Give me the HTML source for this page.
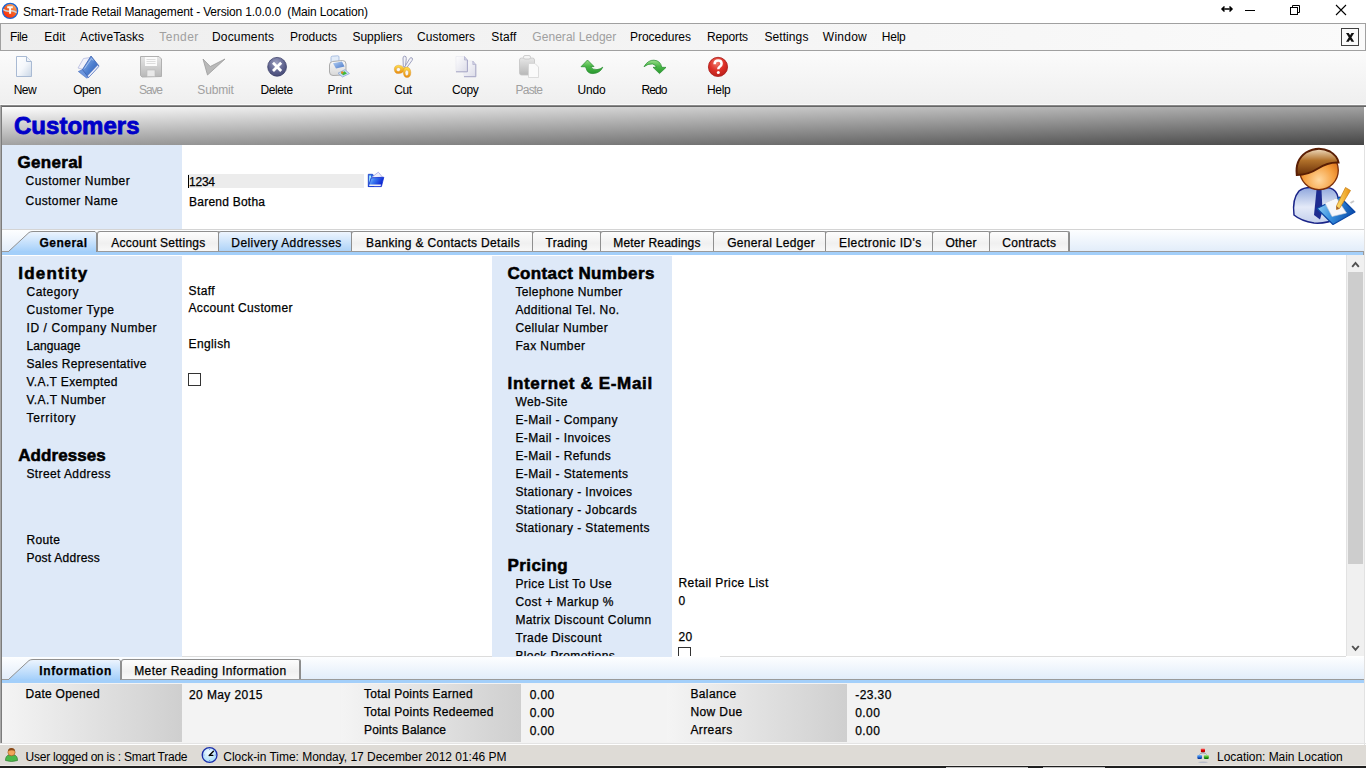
<!DOCTYPE html>
<html><head><meta charset="utf-8"><title>Customers</title>
<style>
html,body{margin:0;padding:0}
body{width:1366px;height:768px;overflow:hidden;position:relative;background:#fff;font-family:"Liberation Sans",sans-serif;color:#000}
.r{position:absolute}
.t{position:absolute;white-space:pre;font-family:"Liberation Sans",sans-serif;-webkit-text-stroke-width:0.25px}
.t.u{-webkit-text-stroke-width:0}
.t.big{-webkit-text-stroke-width:0.8px}
.t.hd{-webkit-text-stroke-width:0.55px}
.tab{position:absolute;top:231px;height:20px;box-sizing:border-box;border:1px solid #8f8f8f;border-bottom:none;border-radius:3px 2px 0 0;background:linear-gradient(#fdfdfd,#f0f0f0 60%,#f8f8f8);box-shadow:1px 0 0 #8c8c8c}
.tab.hov{background:linear-gradient(#eef5fe,#aed3f8)}
.gbox{position:absolute;background:linear-gradient(90deg,#f4f4f4,#cfcfcf)}
</style></head>
<body>
<!-- menu bar -->
<div class="r" style="left:0;top:23px;width:1366px;height:28px;box-sizing:border-box;border:1px solid #a0a0a0;background:linear-gradient(90deg,#eeeeee,#fafafa)"></div>
<div class="r" style="left:1341px;top:28px;width:18px;height:18px;box-sizing:border-box;border:1px solid #404040;background:#fafafa"></div>
<!-- toolbar -->
<div class="r" style="left:0;top:51px;width:1366px;height:53px;background:linear-gradient(#fbfbfb,#efefef)"></div>
<div class="r" style="left:0;top:104px;width:1366px;height:1px;background:#fafafa"></div>
<div class="r" style="left:0;top:105px;width:1366px;height:1px;background:#8a8a8a"></div>
<div class="r" style="left:0;top:106px;width:1366px;height:1px;background:#666"></div>
<!-- left frame border -->
<div class="r" style="left:0;top:105px;width:1px;height:638px;background:#a8a8a8"></div>
<div class="r" style="left:1px;top:105px;width:1px;height:638px;background:#7c7c7c"></div>
<!-- header -->
<div class="r" style="left:2px;top:107px;width:1362px;height:38px;background:linear-gradient(178.4deg,#fdfdfd,#454545)"></div>
<!-- general section -->
<div class="r" style="left:2px;top:145px;width:180px;height:84px;background:#dee9f8"></div>
<div class="r" style="left:1364px;top:145px;width:1px;height:110px;background:#e2e2e2"></div>
<div class="r" style="left:188px;top:174px;width:176px;height:14px;background:#ececec"></div>
<div class="r" style="left:188px;top:175px;width:1px;height:13px;background:#000"></div>
<!-- tab strip -->
<div class="r" style="left:2px;top:229px;width:1362px;height:1px;background:#d4d4d4"></div>
<div class="r" style="left:2px;top:230px;width:1362px;height:21px;background:linear-gradient(#fdfeff,#e2edfa)"></div>
<div class="r" style="left:2px;top:251px;width:1362px;height:1px;background:#9a9a9a"></div>
<div class="r" style="left:2px;top:252px;width:1361px;height:3px;background:#a3cffa"></div>
<div class="r" style="left:1363px;top:251px;width:1px;height:4px;background:#9a9a9a"></div>
<!-- active tab General -->
<svg class="r" style="left:2px;top:230px" width="96" height="22"><defs><linearGradient id="ga" x1="0" y1="0" x2="0" y2="1"><stop offset="0" stop-color="#eef5fe"/><stop offset="1" stop-color="#a3cffa"/></linearGradient></defs><path d="M6.5 21.5 L27 2.5 Q28.5 1.5 31 1.5 L93 1.5 L94.5 3 L94.5 22" fill="url(#ga)" stroke="#8f8f8f" stroke-width="1"/><rect x="7" y="21" width="87" height="2" fill="#a3cffa"/></svg>
<div class="tab" style="left:97px;width:122px"></div>
<div class="tab hov" style="left:218px;width:134px"></div>
<div class="tab" style="left:351px;width:182px"></div>
<div class="tab" style="left:532px;width:69px"></div>
<div class="tab" style="left:600px;width:114px"></div>
<div class="tab" style="left:713px;width:113px"></div>
<div class="tab" style="left:825px;width:108px"></div>
<div class="tab" style="left:932px;width:58px"></div>
<div class="tab" style="left:989px;width:80px"></div>
<!-- content -->
<div class="r" style="left:2px;top:255px;width:1362px;height:1px;background:#fff"></div>
<div class="r" style="left:2px;top:256px;width:180px;height:401px;background:#dee9f8"></div>
<div class="r" style="left:492px;top:256px;width:180px;height:401px;background:#dee9f8"></div>
<div class="r" style="left:188px;top:373px;width:13px;height:13px;box-sizing:border-box;border:1px solid #333"></div>
<div class="r" style="left:678px;top:647px;width:13px;height:9px;box-sizing:border-box;border:1px solid #333;border-bottom:none"></div>
<div class="r" style="left:182px;top:656px;width:310px;height:1px;background:#dcdcdc"></div>
<div class="r" style="left:720px;top:656px;width:626px;height:1px;background:#dcdcdc"></div>
<!-- scrollbar -->
<div class="r" style="left:1346px;top:255px;width:1px;height:401px;background:#e2e2e2"></div>
<div class="r" style="left:1347px;top:255px;width:17px;height:401px;background:#f0f0f0"></div>
<div class="r" style="left:1348px;top:272px;width:15px;height:292px;background:#cdcdcd"></div>
<svg class="r" style="left:1350px;top:259px" width="12" height="10"><path d="M2.2 7.8 L5.5 4 L8.8 7.8" fill="none" stroke="#505050" stroke-width="1.9"/></svg>
<svg class="r" style="left:1350px;top:643px" width="12" height="10"><path d="M2.2 3 L5.5 6.8 L8.8 3" fill="none" stroke="#505050" stroke-width="1.9"/></svg>
<div class="r" style="left:1364px;top:255px;width:1px;height:490px;background:#e2e2e2"></div>
<!-- bottom tab strip -->
<div class="r" style="left:2px;top:657px;width:1362px;height:22px;background:linear-gradient(#fdfeff,#e2edfa)"></div>
<div class="r" style="left:2px;top:679px;width:1362px;height:1px;background:#9a9a9a"></div>
<div class="r" style="left:2px;top:680px;width:1362px;height:3px;background:#a3cffa"></div>
<svg class="r" style="left:2px;top:658px" width="122" height="22"><path d="M6.5 21.5 L27 2.5 Q28.5 1.5 31 1.5 L117 1.5 L118.5 3 L118.5 22" fill="url(#ga)" stroke="#8f8f8f" stroke-width="1"/><rect x="7" y="21" width="111" height="2" fill="#a3cffa"/></svg>
<div class="tab" style="left:121px;top:659px;width:179px"></div>
<!-- info panel -->
<div class="r" style="left:2px;top:683px;width:1362px;height:60px;background:#f3f3f3"></div>
<div class="gbox" style="left:2px;top:684px;width:180px;height:58px"></div>
<div class="gbox" style="left:341px;top:684px;width:180px;height:58px"></div>
<div class="gbox" style="left:667px;top:684px;width:180px;height:58px"></div>
<div class="r" style="left:0;top:743px;width:1366px;height:1px;background:#e4e4e4"></div>
<!-- status bar -->
<div class="r" style="left:0;top:745px;width:1366px;height:20px;background:#dedbd6"></div>
<div class="r" style="left:0;top:765px;width:1366px;height:1px;background:#ebe9e5"></div>
<div class="r" style="left:0;top:766px;width:1366px;height:2px;background:#1f1f1f"></div>
<div class="r" style="left:946px;top:767px;width:82px;height:1px;background:#c4c4c4"></div>
<div class="r" style="left:1043px;top:767px;width:62px;height:1px;background:#c4c4c4"></div>
<div class="r" style="left:2px;top:256px;width:1344px;height:400px;overflow:hidden">
<div class="r" style="left:-2px;top:-256px;width:1366px;height:768px">
<div class="t" style="left:515.4px;top:578px;font-size:12px;line-height:12px;letter-spacing:0.40px;">Price List To Use</div>
<div class="t" style="left:515.4px;top:596px;font-size:12px;line-height:12px;letter-spacing:0.40px;">Cost + Markup %</div>
<div class="t" style="left:515.4px;top:614px;font-size:12px;line-height:12px;letter-spacing:0.40px;">Matrix Discount Column</div>
<div class="t" style="left:515.4px;top:632px;font-size:12px;line-height:12px;letter-spacing:0.40px;">Trade Discount</div>
<div class="t" style="left:515.4px;top:650px;font-size:12px;line-height:12px;letter-spacing:0.40px;">Block Promotions</div>
</div></div>
<!-- title icon -->
<svg class="r" style="left:0;top:0" width="22" height="22"><defs><linearGradient id="og" x1="0.2" y1="0.9" x2="0.8" y2="0.1"><stop offset="0" stop-color="#ff2a08"/><stop offset="0.6" stop-color="#f26a2a"/><stop offset="1" stop-color="#f8a868"/></linearGradient></defs>
<circle cx="10.1" cy="10.9" r="7.5" fill="url(#og)" stroke="#1a66d6" stroke-width="1.4"/>
<path d="M3.2 9.3 Q6.5 11.8 10 11 Q13.5 10.2 16.6 12.6" fill="none" stroke="#d4d0d0" stroke-width="1.6"/>
<path d="M7.2 6.2 L12.8 6.2 L12.8 8.2 L11.1 8.2 L11.1 13.8 L9.1 13.8 L9.1 8.2 L7.2 8.2 Z" fill="#fafafa"/>
</svg>
<!-- window controls -->
<svg class="r" style="left:1220px;top:3px" width="140" height="15">
<path d="M2 6 L12 6 M4.5 3.5 L2 6 L4.5 8.5 M9.5 3.5 L12 6 L9.5 8.5" fill="none" stroke="#000" stroke-width="1.5"/>
<path d="M25 7.5 L35 7.5" stroke="#000" stroke-width="1"/>
<rect x="70.5" y="4.5" width="7" height="7" fill="none" stroke="#000"/>
<path d="M72.5 4.5 L72.5 2.5 L79.5 2.5 L79.5 9.5 L77.5 9.5" fill="none" stroke="#000"/>
<path d="M116 2 L126 12 M126 2 L116 12" stroke="#000" stroke-width="1.1"/>
</svg>
<svg class="r" style="left:1341px;top:28px" width="18" height="18"><path d="M5 5 L7.7 5 L13.2 13.8 L10.5 13.8 Z M10.5 5 L13.2 5 L7.7 13.8 L5 13.8 Z" fill="#111"/></svg>
<!-- toolbar icons -->
<svg class="r" style="left:0;top:50px" width="760" height="32">
<defs>
<linearGradient id="pg" x1="0" y1="0" x2="1" y2="1"><stop offset="0" stop-color="#ffffff"/><stop offset="0.5" stop-color="#f4f7fb"/><stop offset="1" stop-color="#c9d6e6"/></linearGradient>
<linearGradient id="bl" x1="0" y1="0" x2="1" y2="1"><stop offset="0" stop-color="#9bbcef"/><stop offset="0.5" stop-color="#4d7fd0"/><stop offset="1" stop-color="#2c56a8"/></linearGradient>
<linearGradient id="gr" x1="0" y1="0" x2="0" y2="1"><stop offset="0" stop-color="#e6e6e6"/><stop offset="1" stop-color="#b8b8b8"/></linearGradient>
<radialGradient id="dg" cx="0.45" cy="0.3" r="0.8"><stop offset="0" stop-color="#9da0c0"/><stop offset="0.6" stop-color="#5a5e8a"/><stop offset="1" stop-color="#40446e"/></radialGradient>
<radialGradient id="rg" cx="0.45" cy="0.3" r="0.8"><stop offset="0" stop-color="#f07a6a"/><stop offset="0.5" stop-color="#dc2f26"/><stop offset="1" stop-color="#b01c18"/></radialGradient>
<linearGradient id="gn" x1="0" y1="0" x2="0" y2="1"><stop offset="0" stop-color="#9ade8a"/><stop offset="0.45" stop-color="#4cb848"/><stop offset="1" stop-color="#2a9830"/></linearGradient>
<linearGradient id="prb" x1="0" y1="0" x2="0" y2="1"><stop offset="0" stop-color="#fafafa"/><stop offset="1" stop-color="#d8d8d8"/></linearGradient>
<linearGradient id="prt" x1="0" y1="0" x2="1" y2="1"><stop offset="0" stop-color="#b4d0f4"/><stop offset="1" stop-color="#4a78c8"/></linearGradient>
<linearGradient id="cpg" x1="0" y1="0" x2="1" y2="1"><stop offset="0" stop-color="#fdfdfe"/><stop offset="1" stop-color="#dcdce8"/></linearGradient>
<linearGradient id="yl" x1="0" y1="0" x2="0" y2="1"><stop offset="0" stop-color="#ffe24a"/><stop offset="1" stop-color="#e88a10"/></linearGradient>
</defs>
<!-- New -->
<path d="M16.5 6.5 L26.5 6.5 L31.5 11.5 L31.5 26.5 L16.5 26.5 Z" fill="url(#pg)" stroke="#a9bad3" stroke-width="1"/>
<path d="M26.5 6.5 L26.5 11.5 L31.5 11.5" fill="#eef2f8" stroke="#a9bad3" stroke-width="1"/>
<!-- Open -->
<path d="M78 18 L83.5 8.5 L90.5 7.5 L85 20 Z" fill="#f0f1fa" stroke="#b4bade" stroke-width="0.8"/>
<path d="M78.3 21.5 L82.5 19.5 L88.5 27.5 L86.5 28 Z" fill="#6a94dc" stroke="#4a70c0" stroke-width="0.6"/>
<path d="M82.5 19.5 L91 6 L99 16 L88.5 27.5 Z" fill="url(#bl)" stroke="#3a5fb0" stroke-width="0.8"/>
<path d="M87.5 25.8 L97.6 15 L99 16.3 L88.6 27.6 Z" fill="#eceef8" stroke="#4a6cc0" stroke-width="0.5"/>
<path d="M84.5 18.5 L91.5 8.5 L93 10.5" fill="none" stroke="#b8d0f4" stroke-width="0.8"/>
<!-- Save (disabled) -->
<path d="M140.5 6.5 L159 6.5 L161.5 9 L161.5 26.5 L142 27 L140.5 25.5 Z" fill="url(#gr)" stroke="#b0b0b0" stroke-width="1"/>
<rect x="145" y="7" width="12" height="9" fill="#fbfbfb"/>
<path d="M146.5 9.5 H155.5 M146.5 11.5 H155.5 M146.5 13.5 H155.5" stroke="#d0d0d0" stroke-width="0.7"/>
<rect x="147" y="20" width="8" height="6.5" fill="#e9e9e9" stroke="#b8b8b8" stroke-width="0.6"/>
<!-- Submit (disabled) -->
<path d="M203 9 L210.3 16.5 L225 9 L207.5 25 Z" fill="#b9b9b9" stroke="#9a9a9a" stroke-width="0.8" stroke-linejoin="round"/>
<!-- Delete -->
<circle cx="277.1" cy="16.8" r="9.4" fill="url(#dg)" stroke="#3c406a" stroke-width="0.8"/>
<path d="M273 12.7 L281.2 20.9 M281.2 12.7 L273 20.9" stroke="#fff" stroke-width="2.8"/>
<!-- Print -->
<g transform="translate(325,2)">
<path d="M6 11 L6 5.5 Q6 4.3 7.2 4.2 L12.8 3.8 Q14 3.8 14 5 L14 9.5 Z" fill="#e2ecf9" stroke="#9ab4dc" stroke-width="0.8"/>
<path d="M4.5 13 Q4.5 10 7.5 9.5 L17.5 8.5 Q21 8.5 21 12 L21 19.5 Q21 22.5 18 23 L8 23.5 Q4.5 23.5 4.5 20 Z" fill="url(#prb)" stroke="#a4a4a4" stroke-width="0.9"/>
<path d="M8 11.2 L17 9.6 L19.5 14.5 L11 16.5 Z" fill="url(#prt)"/>
<path d="M13 21.2 L20 17.6 L24.5 21.6 L17.5 25 Z" fill="#c8dcf4" stroke="#86a4d4" stroke-width="0.7"/>
<path d="M15.8 21 L19.6 19.2 L22 21.4 L18.2 23.3 Z" fill="#3cb83c"/>
<circle cx="17.2" cy="20.4" r="1.2" fill="#e08a20"/>
</g>
<!-- Cut -->
<g transform="translate(390,3)">
<path d="M13.3 13.8 L13 5 Q13.2 3 14.8 3.1 Q16.5 3.3 16.3 5.5 L15.4 13.8 Z" fill="#f2f2f8" stroke="#9598b8" stroke-width="0.9"/>
<path d="M14.3 14.6 L19.8 5.4 Q21 4 22.1 5 Q23 6 22.1 7.4 L16.4 15.2 Z" fill="#f2f2f8" stroke="#9598b8" stroke-width="0.9"/>
<path fill-rule="evenodd" d="M4.3 16.8 Q4 12.5 8.5 12.2 Q12 12.2 13.6 14.8 Q14.6 17.8 12 19.8 Q9 21.2 6.2 20.2 Q4.5 19.2 4.3 16.8 Z M6.3 16.8 Q6.4 14.6 8.4 14.5 Q10.5 14.6 10.5 16.6 Q10.3 18.5 8.3 18.6 Q6.4 18.6 6.3 16.8 Z" fill="url(#yl)" stroke="#d88a18" stroke-width="0.4"/>
<path fill-rule="evenodd" d="M13.2 18.2 Q13 14.2 16.6 14.1 Q20.6 14.4 20.8 19.5 Q20.8 24.6 16.9 24.6 Q13.3 24.3 13.2 18.2 Z M15 19.8 Q15 17.1 16.8 17.1 Q18.7 17.2 18.6 20.1 Q18.5 22.8 16.8 22.8 Q15 22.6 15 19.8 Z" fill="url(#yl)" stroke="#d88a18" stroke-width="0.4"/>
</g>
<!-- Copy -->
<path d="M464 11 L472.8 11 L475.8 14.5 L475.8 26.7 L464 26.7 Z" fill="url(#cpg)" stroke="#e6e6ee" stroke-width="0.6"/>
<path d="M475.8 14.5 L475.8 26.7 L464 26.7" fill="none" stroke="#a4a4c4" stroke-width="1"/>
<path d="M472.8 11 L472.8 14.5 L475.8 14.5 Z" fill="#d4d4e6" stroke="#a8a8c8" stroke-width="0.6"/>
<path d="M456 6.5 L464.5 6.5 L467.4 10 L467.4 21.8 L456 21.8 Z" fill="url(#cpg)" stroke="#e6e6ee" stroke-width="0.6"/>
<path d="M467.4 10 L467.4 21.8 L456 21.8" fill="none" stroke="#a4a4c4" stroke-width="1"/>
<path d="M464.5 6.5 L464.5 10 L467.4 10 Z" fill="#d4d4e6" stroke="#a8a8c8" stroke-width="0.6"/>
<!-- Paste (disabled) -->
<rect x="519.5" y="8" width="15" height="17" rx="2" fill="url(#gr)" stroke="#c4c4c4" stroke-width="0.8"/>
<rect x="523.5" y="5.5" width="7" height="3.5" rx="1.5" fill="#f4f4f4" stroke="#c4c4c4" stroke-width="0.8"/>
<path d="M528.5 13.5 L535 13.5 L538.5 17 L538.5 27.5 L528.5 27.5 Z" fill="#fafafa" stroke="#d4d4d4" stroke-width="0.8"/>
<!-- Undo -->
<g transform="translate(578,4)">
<path d="M3 12.7 L9.5 6 L16 12.5 L12.8 12.7 Q14.5 16 19 15.6 Q22.5 15.2 24.8 13.2 Q22 19.2 15 19.6 Q9.5 19.8 8.2 14.5 L7.5 12.8 Z" fill="url(#gn)" stroke="#1e8a26" stroke-width="0.7" stroke-linejoin="round"/>
</g>
<!-- Redo -->
<g transform="translate(640,4)">
<path d="M4 12.7 Q8 5.8 14 6.2 Q20.5 6.6 21.8 13.3 L26 13.4 L19.5 19.6 L13 13.3 L16.3 13.3 Q15.5 10.5 12.5 10 Q8 9.5 4 12.7 Z" fill="url(#gn)" stroke="#1e8a26" stroke-width="0.7" stroke-linejoin="round"/>
</g>
<!-- Help -->
<circle cx="718" cy="16.9" r="9.6" fill="url(#rg)" stroke="#a81a18" stroke-width="0.8"/>
<path d="M714.6 14.2 Q714.6 10.6 718.2 10.6 Q721.6 10.6 721.6 13.8 Q721.6 15.8 719.6 16.8 Q718.3 17.5 718.3 19.3" fill="none" stroke="#fff" stroke-width="2.5"/>
<circle cx="718.3" cy="22.6" r="1.5" fill="#fff"/>
</svg>
<!-- folder icon general -->
<svg class="r" style="left:360px;top:166px" width="30" height="26">
<defs><linearGradient id="fb" x1="0" y1="0" x2="1" y2="0.4"><stop offset="0" stop-color="#9ad8ff"/><stop offset="0.45" stop-color="#3a78f0"/><stop offset="1" stop-color="#0a1ed0"/></linearGradient></defs>
<path d="M8.3 8.3 L12.6 8.3 L13.8 9.6 L13.8 20.5 L8.3 20.5 Z" fill="#2a66e0" stroke="#1a40c8" stroke-width="0.8"/>
<path d="M9.2 9.5 L11 9.5 L10.5 18 L9.2 19 Z" fill="#a8f0ff"/>
<path d="M11 11.8 L18.3 6.2 L22.6 11.2 Z" fill="#eeeefa" stroke="#9a9ae0" stroke-width="0.7"/>
<path d="M8.3 20.6 L11.2 11.9 L23.8 11.3 L21.4 20.6 Z" fill="url(#fb)" stroke="#1030d0" stroke-width="0.8" stroke-linejoin="round"/>
<path d="M9.5 18.4 L21 18.4 L20.7 19.9 L9.2 19.9 Z" fill="#f4f0f4"/>
</svg>
<!-- avatar -->
<svg class="r" style="left:1286px;top:142px" width="76" height="88">
<defs>
<radialGradient id="face" cx="0.5" cy="0.75" r="0.65"><stop offset="0" stop-color="#ffd8a0"/><stop offset="0.6" stop-color="#f5a040"/><stop offset="1" stop-color="#d86e18"/></radialGradient>
<linearGradient id="hair" x1="0" y1="0" x2="0" y2="1"><stop offset="0" stop-color="#f0dcc0"/><stop offset="0.45" stop-color="#b0702a"/><stop offset="1" stop-color="#6a3008"/></linearGradient>
<linearGradient id="body" x1="0" y1="0" x2="0" y2="1"><stop offset="0" stop-color="#8ea6dc"/><stop offset="0.55" stop-color="#e4eaf8"/><stop offset="1" stop-color="#c4d0ec"/></linearGradient>
<linearGradient id="pad" x1="0" y1="0" x2="1" y2="0.3"><stop offset="0" stop-color="#a8dcf8"/><stop offset="0.5" stop-color="#3c94e0"/><stop offset="1" stop-color="#0c52b0"/></linearGradient>
<linearGradient id="pen" x1="0" y1="0" x2="1" y2="0"><stop offset="0" stop-color="#ffe070"/><stop offset="1" stop-color="#e89010"/></linearGradient>
</defs>
<path d="M8 73 Q6 57 13 49 Q18 45 26 45.5 L33 48 L41 45.5 Q48 46 51 52 Q55 62 53 76 Q40 82 28 81 Q15 79 8 73 Z" fill="url(#body)" stroke="#1a2488" stroke-width="1.5"/>
<path d="M30.5 48 L35.5 48 L36.5 69 L34 77.5 L28 73 Z" fill="#1e2c90"/>
<circle cx="33" cy="28.3" r="19.3" fill="url(#face)" stroke="#7a2e0a" stroke-width="1.3"/>
<path d="M10.8 33 Q9 18 20 10.5 Q32 3.5 44 9.5 Q51.5 14 52.5 20.5 Q42 20 32 26.5 Q22 33 10.8 33 Z" fill="url(#hair)" stroke="#5a1e04" stroke-width="2"/>
<path d="M31 66.5 L54 55 L69 70 L47 82.5 Z" fill="url(#pad)" stroke="#0a46a6" stroke-width="1.2" stroke-linejoin="round"/>
<path d="M39 61 L50.5 56 L60.5 71 L46 74.5 Z" fill="#f6f7fb" stroke="#c8ccd8" stroke-width="0.6"/>
<path d="M64.5 61 L68 59" stroke="#c8c8c8" stroke-width="2"/>
<path d="M59.5 45.5 L64.5 48.5 L53.5 66.5 L50.5 67.5 L50.5 64 Z" fill="url(#pen)" stroke="#c47a10" stroke-width="0.7" stroke-linejoin="round"/>
<path d="M50.5 64 L53.5 66.5 L50.5 67.5 Z" fill="#a06030"/>
</svg>
<!-- status icons -->
<svg class="r" style="left:4px;top:747px" width="16" height="16">
<path d="M1.5 13.5 Q1.5 8.5 5 8 L10 8 Q13.5 8.5 13.5 13.5 Q7.5 15.5 1.5 13.5 Z" fill="#4bb84a" stroke="#2d7a2e" stroke-width="0.7"/>
<circle cx="7.5" cy="5.2" r="3.6" fill="#f2a55a" stroke="#9a5a20" stroke-width="0.6"/>
<path d="M4 4 Q4.5 0.8 7.5 1 Q10.5 1 11 4 Q8 2.5 4 4 Z" fill="#8a4a18"/>
</svg>
<svg class="r" style="left:201px;top:746px" width="18" height="18">
<defs><radialGradient id="clk" cx="0.45" cy="0.35" r="0.7"><stop offset="0" stop-color="#f4fcff"/><stop offset="1" stop-color="#9cd8f8"/></radialGradient></defs>
<circle cx="8.6" cy="9" r="7.4" fill="url(#clk)" stroke="#1a2ca8" stroke-width="1.3"/>
<path d="M8.6 2.8 V3.8 M8.6 14.2 V15.2 M2.4 9 H3.4 M13.8 9 H14.8" stroke="#4a6ad0" stroke-width="0.8"/>
<path d="M8.2 9.4 L12.4 5.3 M8.2 9.4 L11.8 9.4" stroke="#000" stroke-width="1.4" stroke-linecap="round"/>
</svg>
<svg class="r" style="left:1196px;top:747px" width="15" height="17">
<defs>
<linearGradient id="nr" x1="0" y1="0" x2="0" y2="1"><stop offset="0" stop-color="#ff8080"/><stop offset="0.5" stop-color="#e00000"/><stop offset="1" stop-color="#a00000"/></linearGradient>
<linearGradient id="nb" x1="0" y1="0" x2="0" y2="1"><stop offset="0" stop-color="#7ac0ff"/><stop offset="0.5" stop-color="#2a70d8"/><stop offset="1" stop-color="#002a90"/></linearGradient>
<linearGradient id="ngn" x1="0" y1="0" x2="0" y2="1"><stop offset="0" stop-color="#b8f098"/><stop offset="0.5" stop-color="#40b020"/><stop offset="1" stop-color="#006a00"/></linearGradient>
</defs>
<path d="M3.5 7.6 Q4 6 7 5.8 Q10 6 10.5 7.6" fill="none" stroke="#8a9aaa" stroke-width="0.9"/>
<rect x="4.9" y="1.4" width="4.1" height="3.8" rx="0.8" fill="url(#nr)"/>
<rect x="1.3" y="7.9" width="4.7" height="4" rx="0.8" fill="url(#nb)"/>
<rect x="7.9" y="7.9" width="4.9" height="4" rx="0.8" fill="url(#ngn)"/>
<ellipse cx="7" cy="15.3" rx="4.8" ry="0.8" fill="#b8bcc8"/>
</svg>

<div class="t u" style="left:23.0px;top:6px;font-size:12px;line-height:12px;letter-spacing:-0.15px;">Smart-Trade Retail Management - Version 1.0.0.0  (Main Location)</div>
<div class="t u" style="left:10.0px;top:31px;font-size:12px;line-height:12px;letter-spacing:-0.45px;">File</div>
<div class="t u" style="left:44.3px;top:31px;font-size:12px;line-height:12px;letter-spacing:0.10px;">Edit</div>
<div class="t u" style="left:80.1px;top:31px;font-size:12px;line-height:12px;letter-spacing:0.06px;">ActiveTasks</div>
<div class="t u" style="left:159.3px;top:31px;font-size:12px;line-height:12px;color:#a0a0a0;letter-spacing:0.46px;">Tender</div>
<div class="t u" style="left:212.0px;top:31px;font-size:12px;line-height:12px;letter-spacing:0.16px;">Documents</div>
<div class="t u" style="left:290.0px;top:31px;font-size:12px;line-height:12px;letter-spacing:-0.05px;">Products</div>
<div class="t u" style="left:352.4px;top:31px;font-size:12px;line-height:12px;">Suppliers</div>
<div class="t u" style="left:417.1px;top:31px;font-size:12px;line-height:12px;">Customers</div>
<div class="t u" style="left:491.3px;top:31px;font-size:12px;line-height:12px;letter-spacing:0.13px;">Staff</div>
<div class="t u" style="left:532.3px;top:31px;font-size:12px;line-height:12px;color:#a0a0a0;letter-spacing:0.05px;">General Ledger</div>
<div class="t u" style="left:630.0px;top:31px;font-size:12px;line-height:12px;letter-spacing:-0.04px;">Procedures</div>
<div class="t u" style="left:707.1px;top:31px;font-size:12px;line-height:12px;letter-spacing:-0.17px;">Reports</div>
<div class="t u" style="left:764.4px;top:31px;font-size:12px;line-height:12px;letter-spacing:0.09px;">Settings</div>
<div class="t u" style="left:822.8px;top:31px;font-size:12px;line-height:12px;letter-spacing:0.26px;">Window</div>
<div class="t u" style="left:881.8px;top:31px;font-size:12px;line-height:12px;letter-spacing:-0.23px;">Help</div>
<div class="t u" style="left:13.7px;top:84px;font-size:12px;line-height:12px;letter-spacing:-0.51px;">New</div>
<div class="t u" style="left:73.2px;top:84px;font-size:12px;line-height:12px;letter-spacing:-0.45px;">Open</div>
<div class="t u" style="left:139.0px;top:84px;font-size:12px;line-height:12px;color:#a0a0a0;letter-spacing:-1.12px;">Save</div>
<div class="t u" style="left:197.3px;top:84px;font-size:12px;line-height:12px;color:#a0a0a0;letter-spacing:-0.15px;">Submit</div>
<div class="t u" style="left:260.5px;top:84px;font-size:12px;line-height:12px;letter-spacing:-0.42px;">Delete</div>
<div class="t u" style="left:327.5px;top:84px;font-size:12px;line-height:12px;letter-spacing:-0.05px;">Print</div>
<div class="t u" style="left:394.3px;top:84px;font-size:12px;line-height:12px;letter-spacing:-0.49px;">Cut</div>
<div class="t u" style="left:452.0px;top:84px;font-size:12px;line-height:12px;letter-spacing:-0.41px;">Copy</div>
<div class="t u" style="left:515.6px;top:84px;font-size:12px;line-height:12px;color:#a0a0a0;letter-spacing:-0.82px;">Paste</div>
<div class="t u" style="left:577.5px;top:84px;font-size:12px;line-height:12px;letter-spacing:-0.16px;">Undo</div>
<div class="t u" style="left:641.5px;top:84px;font-size:12px;line-height:12px;letter-spacing:-0.90px;">Redo</div>
<div class="t u" style="left:706.9px;top:84px;font-size:12px;line-height:12px;letter-spacing:-0.30px;">Help</div>
<div class="t big" style="left:14.0px;top:114px;font-size:24px;line-height:24px;font-weight:700;color:#0000c8;letter-spacing:0.02px;">Customers</div>
<div class="t hd" style="left:17.6px;top:154px;font-size:17px;line-height:17px;font-weight:700;letter-spacing:0.28px;">General</div>
<div class="t" style="left:25.6px;top:175px;font-size:12px;line-height:12px;letter-spacing:0.43px;">Customer Number</div>
<div class="t" style="left:25.6px;top:195px;font-size:12px;line-height:12px;letter-spacing:0.39px;">Customer Name</div>
<div class="t" style="left:189.0px;top:176px;font-size:12px;line-height:12px;letter-spacing:-0.23px;">1234</div>
<div class="t" style="left:189.0px;top:196px;font-size:12px;line-height:12px;letter-spacing:0.24px;">Barend Botha</div>
<div class="t" style="left:39.5px;top:237px;font-size:12px;line-height:12px;font-weight:700;letter-spacing:0.47px;">General</div>
<div class="t" style="left:111.3px;top:237px;font-size:12px;line-height:12px;letter-spacing:0.26px;">Account Settings</div>
<div class="t" style="left:231.3px;top:237px;font-size:12px;line-height:12px;letter-spacing:0.43px;">Delivery Addresses</div>
<div class="t" style="left:366.1px;top:237px;font-size:12px;line-height:12px;letter-spacing:0.33px;">Banking &amp; Contacts Details</div>
<div class="t" style="left:545.5px;top:237px;font-size:12px;line-height:12px;letter-spacing:0.29px;">Trading</div>
<div class="t" style="left:613.3px;top:237px;font-size:12px;line-height:12px;letter-spacing:0.19px;">Meter Readings</div>
<div class="t" style="left:727.2px;top:237px;font-size:12px;line-height:12px;letter-spacing:0.32px;">General Ledger</div>
<div class="t" style="left:839.1px;top:237px;font-size:12px;line-height:12px;letter-spacing:0.41px;">Electronic ID's</div>
<div class="t" style="left:945.4px;top:237px;font-size:12px;line-height:12px;letter-spacing:0.25px;">Other</div>
<div class="t" style="left:1002.3px;top:237px;font-size:12px;line-height:12px;letter-spacing:0.29px;">Contracts</div>
<div class="t hd" style="left:18.3px;top:265px;font-size:17px;line-height:17px;font-weight:700;letter-spacing:1.22px;">Identity</div>
<div class="t" style="left:26.5px;top:286px;font-size:12px;line-height:12px;letter-spacing:0.47px;">Category</div>
<div class="t" style="left:26.5px;top:304px;font-size:12px;line-height:12px;letter-spacing:0.53px;">Customer Type</div>
<div class="t" style="left:26.5px;top:322px;font-size:12px;line-height:12px;letter-spacing:0.59px;">ID / Company Number</div>
<div class="t" style="left:26.5px;top:340px;font-size:12px;line-height:12px;letter-spacing:0.09px;">Language</div>
<div class="t" style="left:26.5px;top:358px;font-size:12px;line-height:12px;letter-spacing:0.31px;">Sales Representative</div>
<div class="t" style="left:26.5px;top:376px;font-size:12px;line-height:12px;letter-spacing:0.38px;">V.A.T Exempted</div>
<div class="t" style="left:26.5px;top:394px;font-size:12px;line-height:12px;letter-spacing:0.39px;">V.A.T Number</div>
<div class="t" style="left:26.5px;top:412px;font-size:12px;line-height:12px;letter-spacing:0.71px;">Territory</div>
<div class="t hd" style="left:18.2px;top:447px;font-size:17px;line-height:17px;font-weight:700;letter-spacing:0.07px;">Addresses</div>
<div class="t" style="left:26.4px;top:468px;font-size:12px;line-height:12px;letter-spacing:0.41px;">Street Address</div>
<div class="t" style="left:26.4px;top:534px;font-size:12px;line-height:12px;letter-spacing:0.40px;">Route</div>
<div class="t" style="left:26.4px;top:552px;font-size:12px;line-height:12px;letter-spacing:0.25px;">Post Address</div>
<div class="t" style="left:188.5px;top:285px;font-size:12px;line-height:12px;letter-spacing:0.40px;">Staff</div>
<div class="t" style="left:188.5px;top:302px;font-size:12px;line-height:12px;letter-spacing:0.35px;">Account Customer</div>
<div class="t" style="left:188.5px;top:338px;font-size:12px;line-height:12px;letter-spacing:0.40px;">English</div>
<div class="t hd" style="left:507.4px;top:265px;font-size:17px;line-height:17px;font-weight:700;letter-spacing:0.38px;">Contact Numbers</div>
<div class="t" style="left:515.4px;top:286px;font-size:12px;line-height:12px;letter-spacing:0.37px;">Telephone Number</div>
<div class="t" style="left:515.4px;top:304px;font-size:12px;line-height:12px;letter-spacing:0.40px;">Additional Tel. No.</div>
<div class="t" style="left:515.4px;top:322px;font-size:12px;line-height:12px;letter-spacing:0.40px;">Cellular Number</div>
<div class="t" style="left:515.4px;top:340px;font-size:12px;line-height:12px;letter-spacing:0.40px;">Fax Number</div>
<div class="t hd" style="left:507.6px;top:375px;font-size:17px;line-height:17px;font-weight:700;letter-spacing:0.65px;">Internet &amp; E-Mail</div>
<div class="t" style="left:515.4px;top:396px;font-size:12px;line-height:12px;letter-spacing:0.40px;">Web-Site</div>
<div class="t" style="left:515.4px;top:414px;font-size:12px;line-height:12px;letter-spacing:0.40px;">E-Mail - Company</div>
<div class="t" style="left:515.4px;top:432px;font-size:12px;line-height:12px;letter-spacing:0.40px;">E-Mail - Invoices</div>
<div class="t" style="left:515.4px;top:450px;font-size:12px;line-height:12px;letter-spacing:0.40px;">E-Mail - Refunds</div>
<div class="t" style="left:515.4px;top:468px;font-size:12px;line-height:12px;letter-spacing:0.40px;">E-Mail - Statements</div>
<div class="t" style="left:515.4px;top:486px;font-size:12px;line-height:12px;letter-spacing:0.40px;">Stationary - Invoices</div>
<div class="t" style="left:515.4px;top:504px;font-size:12px;line-height:12px;letter-spacing:0.40px;">Stationary - Jobcards</div>
<div class="t" style="left:515.4px;top:522px;font-size:12px;line-height:12px;letter-spacing:0.40px;">Stationary - Statements</div>
<div class="t hd" style="left:507.6px;top:557px;font-size:17px;line-height:17px;font-weight:700;letter-spacing:0.40px;">Pricing</div>
<div class="t" style="left:678.5px;top:577px;font-size:12px;line-height:12px;letter-spacing:0.40px;">Retail Price List</div>
<div class="t" style="left:678.5px;top:595px;font-size:12px;line-height:12px;letter-spacing:0.40px;">0</div>
<div class="t" style="left:678.5px;top:631px;font-size:12px;line-height:12px;letter-spacing:0.40px;">20</div>
<div class="t" style="left:39.3px;top:665px;font-size:12px;line-height:12px;font-weight:700;letter-spacing:0.60px;">Information</div>
<div class="t" style="left:134.2px;top:665px;font-size:12px;line-height:12px;letter-spacing:0.41px;">Meter Reading Information</div>
<div class="t" style="left:25.6px;top:688px;font-size:12px;line-height:12px;letter-spacing:0.26px;">Date Opened</div>
<div class="t" style="left:189.0px;top:689px;font-size:12px;line-height:12px;letter-spacing:0.40px;">20 May 2015</div>
<div class="t" style="left:364.0px;top:688px;font-size:12px;line-height:12px;letter-spacing:0.25px;">Total Points Earned</div>
<div class="t" style="left:364.0px;top:706px;font-size:12px;line-height:12px;letter-spacing:0.27px;">Total Points Redeemed</div>
<div class="t" style="left:364.0px;top:724px;font-size:12px;line-height:12px;letter-spacing:0.15px;">Points Balance</div>
<div class="t" style="left:529.7px;top:689px;font-size:12px;line-height:12px;letter-spacing:0.40px;">0.00</div>
<div class="t" style="left:529.7px;top:707px;font-size:12px;line-height:12px;letter-spacing:0.40px;">0.00</div>
<div class="t" style="left:529.7px;top:725px;font-size:12px;line-height:12px;letter-spacing:0.40px;">0.00</div>
<div class="t" style="left:690.4px;top:688px;font-size:12px;line-height:12px;letter-spacing:0.40px;">Balance</div>
<div class="t" style="left:690.4px;top:706px;font-size:12px;line-height:12px;letter-spacing:0.40px;">Now Due</div>
<div class="t" style="left:690.4px;top:724px;font-size:12px;line-height:12px;letter-spacing:0.40px;">Arrears</div>
<div class="t" style="left:855.3px;top:689px;font-size:12px;line-height:12px;letter-spacing:0.40px;">-23.30</div>
<div class="t" style="left:855.3px;top:707px;font-size:12px;line-height:12px;letter-spacing:0.40px;">0.00</div>
<div class="t" style="left:855.3px;top:725px;font-size:12px;line-height:12px;letter-spacing:0.40px;">0.00</div>
<div class="t u" style="left:25.6px;top:751px;font-size:12px;line-height:12px;letter-spacing:-0.25px;">User logged on is : Smart Trade</div>
<div class="t u" style="left:223.3px;top:751px;font-size:12px;line-height:12px;letter-spacing:-0.03px;">Clock-in Time: Monday, 17 December 2012 01:46 PM</div>
<div class="t u" style="left:1217.1px;top:751px;font-size:12px;line-height:12px;letter-spacing:-0.05px;">Location: Main Location</div>
</body></html>
